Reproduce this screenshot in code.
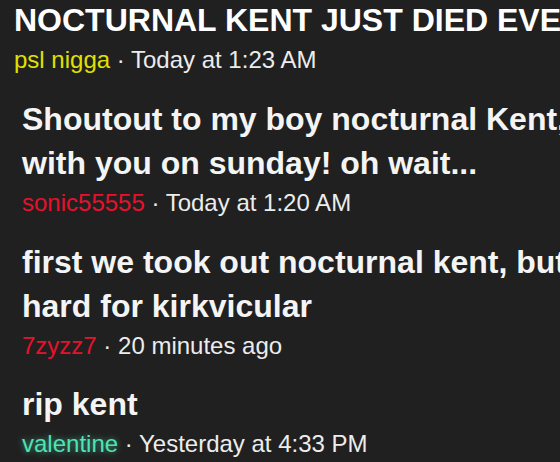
const messages = [
  {
    lines: ['Shoutout to my boy nocturnal Kent,', 'with you on sunday! oh wait...'],
    user: 'sonic55555',
    userClass: 'text-[#e8112d]',
    time: 'Today at 1:20 AM',
    gap: 'mt-[17px]',
  },
  {
    lines: ['first we took out nocturnal kent, but', 'hard for kirkvicular'],
    user: '7zyzz7',
    userClass: 'text-[#e8112d]',
    time: '20 minutes ago',
    gap: 'mt-[19px]',
  },
  {
    lines: ['rip kent'],
    user: 'valentine',
    userClass: 'text-[#4fe3b4] [text-shadow:0_0_6px_rgba(79,227,180,0.6)]',
    time: 'Yesterday at 4:33 PM',
    gap: 'mt-[18px]',
  },
];

export default function App() {
  return (
    <div className="h-[462px] w-[560px] overflow-hidden bg-[#202020] font-['Liberation_Sans',Arial,sans-serif] text-white">
      <div className="px-[14px]">
        <h1 className="whitespace-nowrap text-[32px] font-bold leading-[40px] text-white">
          NOCTURNAL KENT JUST DIED EVERYONE
        </h1>
        <div className="whitespace-nowrap text-[24px] leading-[40px]">
          <span className="text-[#e0e000]">psl nigga</span>
          <span className="text-[#ececec]"> · Today at 1:23 AM</span>
        </div>
      </div>

      <div className="px-[22px]">
        {messages.map((m) => (
          <div key={m.user} className={m.gap}>
            <p className="whitespace-nowrap text-[32px] font-bold leading-[44px] text-[#f4f4f4]">
              {m.lines.map((l, i) => (
                <span key={i} className="block">
                  {l}
                </span>
              ))}
            </p>
            <div className="whitespace-nowrap text-[24px] leading-[36px]">
              <span className={m.userClass}>{m.user}</span>
              <span className="text-[#ececec]"> · {m.time}</span>
            </div>
          </div>
        ))}
      </div>
    </div>
  );
}
